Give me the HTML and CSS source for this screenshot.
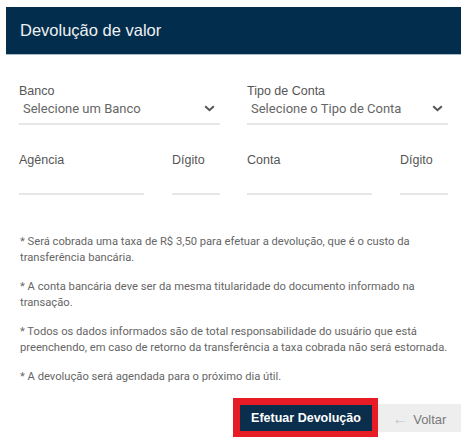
FILE: index.html
```html
<!DOCTYPE html>
<html lang="pt-BR">
<head>
  <meta charset="UTF-8">
  <title>Devolução de valor</title>
  <link rel="stylesheet" href="styles.css">
</head>
<body>
<div class="modal">
  <div class="modal-head">Devolução de valor</div>

  <div class="modal-body">
    <div class="row">
      <div class="field wide">
        <label>Banco</label>
        <div class="select">
          <span>Selecione um Banco</span>
          <svg width="11" height="7" viewBox="0 0 11 7"><path d="M1.2 1.2 L5.5 5.2 L9.8 1.2" fill="none" stroke="#555" stroke-width="2"/></svg>
        </div>
      </div>
      <div class="field wide">
        <label>Tipo de Conta</label>
        <div class="select">
          <span>Selecione o Tipo de Conta</span>
          <svg width="11" height="7" viewBox="0 0 11 7"><path d="M1.2 1.2 L5.5 5.2 L9.8 1.2" fill="none" stroke="#555" stroke-width="2"/></svg>
        </div>
      </div>
    </div>

    <div class="row">
      <div class="pair">
        <div class="field grow">
          <label>Agência</label>
          <div class="input"></div>
        </div>
        <div class="field digit">
          <label>Dígito</label>
          <div class="input"></div>
        </div>
      </div>
      <div class="pair">
        <div class="field grow">
          <label>Conta</label>
          <div class="input"></div>
        </div>
        <div class="field digit">
          <label>Dígito</label>
          <div class="input"></div>
        </div>
      </div>
    </div>

    <div class="notes">
      <p>* Será cobrada uma taxa de R$ 3,50 para efetuar a devolução, que é o custo da transferência bancária.</p>
      <p>* A conta bancária deve ser da mesma titularidade do documento informado na transação.</p>
      <p>* Todos os dados informados são de total responsabilidade do usuário que está preenchendo, em caso de retorno da transferência a taxa cobrada não será estornada.</p>
      <p>* A devolução será agendada para o próximo dia útil.</p>
    </div>
  </div>

  <div class="actions">
    <button class="btn-main">Efetuar Devolução</button>
    <button class="btn-back"><span class="arrow">&larr;</span> Voltar</button>
  </div>
</div>
</body>
</html>
```

FILE: styles.css
```css
* {
  padding: 0;
  margin: 0;
  box-sizing: border-box;
}

body {
  background: #fff;
  font-family: "Liberation Sans", Arial, sans-serif;
}

.modal {
  width: 455px;
  margin: 7px 0 0 6px;
}

.modal-head {
  height: 48px;
  background: #032d4c;
  border-bottom: 1px solid #a7b8c6;
  color: #eef2f5;
  font-size: 16.5px;
  line-height: 46px;
  padding-left: 14px;
}

.modal-body {
  padding: 0 13px;
}

.row {
  display: flex;
  gap: 27px;
}

.row:first-child {
  padding-top: 29px;
}

.row + .row {
  padding-top: 28px;
}

.field label {
  display: block;
  font-size: 12.5px;
  line-height: 15px;
  color: #555;
}

.wide {
  width: 201px;
}

.select {
  display: flex;
  align-items: center;
  justify-content: space-between;
  height: 26px;
  padding: 0 5px 6px 4px;
  border-bottom: 2px solid #e6e6e6;
  font-family: Roboto, "Liberation Sans", sans-serif;
  font-size: 13px;
  color: #666;
}

.pair {
  display: flex;
  gap: 28px;
  width: 201px;
}

.grow {
  flex: 1;
}

.digit {
  width: 48px;
}

.input {
  height: 27px;
  border-bottom: 2px solid #e6e6e6;
}

.notes {
  padding-top: 39px;
  padding-left: 1px;
}

.notes p {
  font-family: Roboto, "Liberation Sans", sans-serif;
  font-size: 11.2px;
  line-height: 16px;
  color: #666;
  margin-bottom: 13px;
}

.actions {
  display: flex;
  justify-content: flex-end;
  align-items: flex-start;
}

.actions button {
  font-family: "Liberation Sans", Arial, sans-serif;
  cursor: pointer;
}

.btn-main {
  width: 145px;
  height: 39px;
  background: #0b2e4c;
  border: 6px solid #e81c24;
  border-width: 7px 6px 6px 7px;
  color: #fff;
  font-size: 12.5px;
  font-weight: bold;
}

.btn-back {
  width: 83px;
  height: 28px;
  margin-top: 6px;
  background: #eeeeee;
  border: 0;
  color: #7a7a7a;
  font-size: 13px;
}

.arrow {
  color: #b5c2cc;
  font-size: 15px;
  margin-right: 2px;
}
```
